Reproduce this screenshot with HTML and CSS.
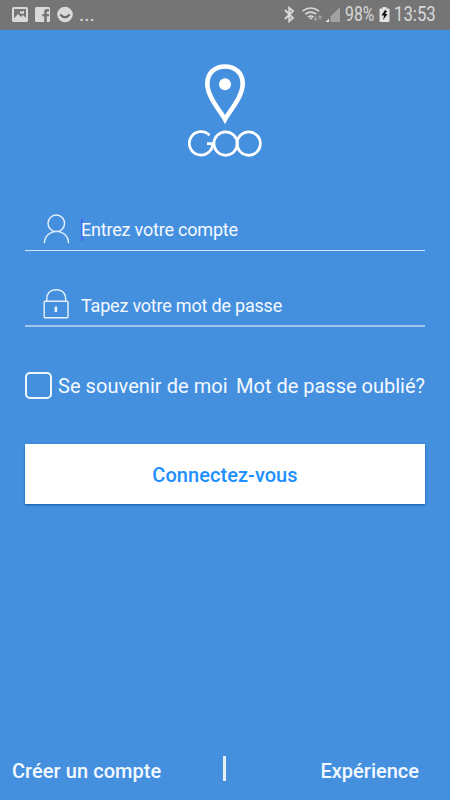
FILE: index.html
```html
<!DOCTYPE html>
<html lang="fr">
<head>
<meta charset="utf-8">
<title>GOO</title>
<link rel="stylesheet" href="styles.css">
</head>
<body>
<div class="screen">
  <header class="status">
    <svg class="notices" width="64" height="30" viewBox="0 0 64 30">
      <path fill="#d9d9d9" fill-rule="evenodd" d="M1.500 7h13q1.500 0 1.500 1.500v12q0 1.500-1.500 1.500h-13Q0 22 0 20.500v-12Q0 7 1.500 7zM2 9v9.500l4-4.500 3 3 2-2 3 3V9zM8 10.500l1.500 1.500 2.500-1.500v3L9.500 14 8 13z"/>
      <path fill="#d9d9d9" fill-rule="evenodd" d="M24.500 7h12q1.500 0 1.500 1.500v12q0 1.500-1.500 1.500h-1.700v-5.700H37v-2.400h-2.200v-1.400q0-1 1-1H37V9h-2q-2.800 0-2.800 2.800v2.100h-2v2.400h2V22h-7.700Q23 22 23 20.500v-12Q23 7 24.500 7z"/>
      <circle cx="53" cy="14.500" r="7.800" fill="#d9d9d9"/>
      <path d="M48.300 14.500q4.700 5.500 9.400 0" fill="none" stroke="#686868" stroke-width="2"/>
    </svg>
    <span class="more">...</span>
    <div class="system">
      <svg width="60" height="30" viewBox="0 0 60 30">
        <path d="M2 10l8 8-3.800 3.200V7.800L10 11l-8 8" fill="none" stroke="#d9d9d9" stroke-width="1.800"/>
        <g fill="none" stroke="#d9d9d9" stroke-width="1.600">
          <path d="M19.500 11.200q8.300-6.500 16.500 0M22.300 14.200q5.500-4.200 11 0M25 17q2.700-2 5.500 0"/>
        </g>
        <path d="M26 17.500h4l-2 2.200z" fill="#d9d9d9"/>
        <path d="M32.500 16v4M30.800 18.500l1.700 1.700 1.700-1.700M37 20v-4M35.300 17.500l1.700-1.700 1.700 1.700" fill="none" stroke="#a5a5a5" stroke-width="1.100"/>
        <path d="M57 7v15H47.500v-5.500z" fill="#a2a2a2"/>
        <path d="M46 18.500V22h-3.500z" fill="#e2e2e2"/>
      </svg>
      <span class="percent">98%</span>
      <svg width="12" height="30" viewBox="0 0 12 30">
        <path d="M3.500 7h4v1.500h2q1 0 1 1V21q0 1-1 1h-8q-1 0-1-1V9.500q0-1 1-1h2z" fill="#e2e2e2"/>
        <path d="M6 10L2.500 15.500h2.600l-1 4.500L8.500 14H6.200L8 11z" fill="#111"/>
      </svg>
      <span class="clock">13:53</span>
    </div>
  </header>

  <main class="login">
    <svg class="logo" width="74" height="98" viewBox="0 0 74 98">
      <g fill="none" stroke="#fff">
        <path stroke-width="4.600" d="M37 58.300C32.500 50 19.300 36 19.300 22.500C19.300 12 27 5.500 37 5.500S54.700 12 54.700 22.500C54.700 36 41.500 50 37 58.300z"/>
        <g stroke-width="2.700">
          <path d="M21.500 74.300A11.700 11.700 0 1 0 24.700 82.700H19"/>
          <circle cx="37.600" cy="82.600" r="11.700"/>
          <circle cx="60.700" cy="82.600" r="11.700"/>
        </g>
      </g>
      <circle cx="37" cy="23.200" r="6" fill="#fff"/>
    </svg>

    <div class="field account">
      <svg width="28" height="32" viewBox="0 0 28 32" fill="none" stroke="#e8f2fc" stroke-width="1.400">
        <circle cx="13.300" cy="11.300" r="8.300"/>
        <path d="M1.400 31.300v-.8C2.500 15.700 24.600 15.700 25.500 30.500v.8"/>
      </svg>
      <span class="hint caret">Entrez votre compte</span>
    </div>
    <div class="field password">
      <svg width="28" height="32" viewBox="0 0 28 32" fill="none" stroke="#e8f2fc" stroke-width="1.400">
        <rect x="1.200" y="14.200" width="23.800" height="16.600" rx="1"/>
        <path d="M3.700 14v-1.500C3.700 6 7.500 2.700 13.200 2.700S22.700 6 22.700 12.500V14"/>
        <path d="M12.900 19.500v5.500" stroke-width="2.500"/>
      </svg>
      <span class="hint">Tapez votre mot de passe</span>
    </div>

    <div class="options">
      <label class="remember"><span class="box"></span><span class="remember-text">Se souvenir de moi</span></label>
      <span class="forgot">Mot de passe oublié?</span>
    </div>

    <button class="submit">Connectez-vous</button>
  </main>

  <footer class="links">
    <span class="create">Créer un compte</span>
    <i class="divider"></i>
    <span class="demo">Expérience</span>
  </footer>
</div>
</body>
</html>
```
FILE: styles.css
```css
* { box-sizing: border-box; }
body { margin: 0; font-family: Roboto, sans-serif; color: #f4f9ff; }
.screen { width: 450px; height: 800px; background: #4490df; display: flex; flex-direction: column; overflow: hidden; }
svg { display: block; flex: none; overflow: visible; }

.status { height: 30px; flex: none; background: #757575; color: #d9d9d9; display: flex; padding: 0 14px 0 12px; line-height: 30px; white-space: nowrap; }
.more { font-size: 20px; margin-left: 3px; line-height: 29px; }
.system { display: flex; margin-left: auto; }
.percent, .clock { font-size: 19.500px; transform-origin: left center; }
.percent { width: 30px; margin: 0 4px 0 2px; transform: scaleX(.81); }
.clock { width: 42px; margin-left: 3px; transform: scaleX(.86); }

.login { flex: 1; display: flex; flex-direction: column; padding: 31px 25px 0; }
.logo { align-self: center; }
.field { display: flex; border-bottom: 1px solid #d3e5f8; padding-left: 18px; height: 39px; }
.account { margin-top: 53px; }
.password { margin-top: 36px; height: 40px; border-bottom: 2px solid #a3c6ef; }
.hint { font-size: 18px; letter-spacing: -0.2px; line-height: 22px; margin: 7px 0 0 10px; white-space: nowrap; align-self: flex-start; }
.password .hint { margin-top: 8px; }
.caret { background: linear-gradient(#4569ef, #4569ef) left / 2px 100% no-repeat; }

.options { display: flex; justify-content: space-between; margin-top: 45px; height: 28px; line-height: 29px; font-size: 20px; white-space: nowrap; }
.remember { display: flex; }
.remember-text { letter-spacing: 0.06px; }
.box { width: 27px; height: 27px; border: 2px solid #edf5fd; border-radius: 5px; margin-right: 6px; }

.submit { margin: 44px 0 0; height: 60px; flex: none; border: 0; padding: 2px 0 0; background: #fff; color: #1e8fff; font: 500 20px Roboto, sans-serif; letter-spacing: 0.05px; box-shadow: 0 1px 2px #0b5aa8; }

.links { height: 60px; flex: none; display: flex; padding: 0 31px 0 12px; font-size: 20px; font-weight: 500; line-height: 62px; position: relative; justify-content: space-between; }
.create { letter-spacing: 0.06px; }
.divider { position: absolute; left: 223px; top: 16px; width: 3px; height: 25px; background: #e7effb; }
```
